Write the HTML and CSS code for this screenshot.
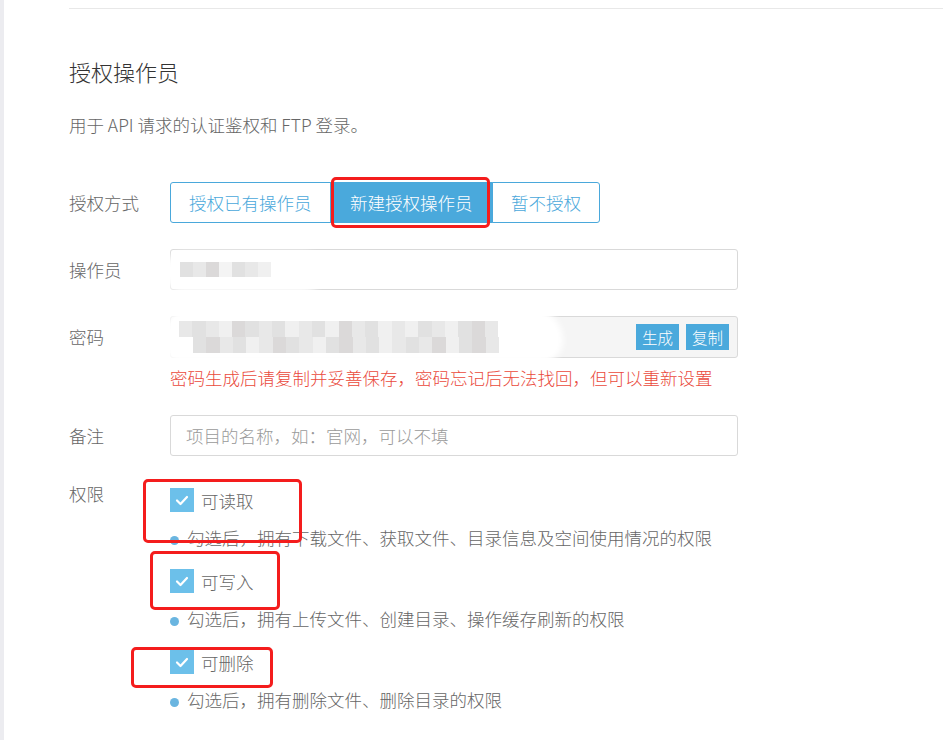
FILE: index.html
```html
<!DOCTYPE html>
<html lang="zh-CN">
<head>
<meta charset="utf-8">
<title>授权操作员</title>
<link rel="stylesheet" href="styles.css">
</head>
<body>
<div class="page">
  <div class="rail"></div>
  <main class="main">
    <div class="divider"></div>
    <h2 class="title">授权操作员</h2>
    <p class="desc">用于 API 请求的认证鉴权和 FTP 登录。</p>

    <form class="form">
      <div class="row">
        <span class="label">授权方式</span>
        <div class="seg">
          <button type="button" class="seg-btn">授权已有操作员</button>
          <button type="button" class="seg-btn active">新建授权操作员<span class="mark mark-a"></span></button>
          <button type="button" class="seg-btn">暂不授权</button>
        </div>
      </div>

      <div class="row row-gap">
        <span class="label">操作员</span>
        <div class="input input-op">
          <span class="blob blob-op"></span>
          <span class="pix pix-op">
            <i class="g2"></i><i class="g1"></i><i class="g3"></i><i class="g4"></i><i class="g2"></i><i class="g1"></i><i class="g0"></i>
          </span>
        </div>
      </div>

      <div class="row row-gap">
        <span class="label">密码</span>
        <div class="input input-pw">
          <span class="blob blob-pw"></span>
          <span class="pix pix-pw">
            <span class="pix-row">
              <i class="g1"></i><i class="g2"></i><i class="g1"></i><i class="g0"></i><i class="g3"></i><i class="g2"></i><i class="g1"></i><i class="g2"></i><i class="g0"></i><i class="g1"></i><i class="g2"></i><i class="g0"></i><i class="g3"></i><i class="g1"></i><i class="g2"></i><i class="g0"></i><i class="g1"></i><i class="g0"></i><i class="g2"></i><i class="g1"></i><i class="g0"></i><i class="g2"></i><i class="g3"></i><i class="g1"></i>
            </span>
            <span class="pix-row pix-row-2">
              <i class="g2"></i><i class="g3"></i><i class="g1"></i><i class="g2"></i><i class="g0"></i><i class="g1"></i><i class="g3"></i><i class="g2"></i><i class="g1"></i><i class="g0"></i><i class="g2"></i><i class="g3"></i><i class="g1"></i><i class="g2"></i><i class="g0"></i><i class="g1"></i><i class="g2"></i><i class="g1"></i><i class="g3"></i><i class="g0"></i><i class="g2"></i><i class="g3"></i><i class="g1"></i>
            </span>
          </span>
          <span class="mini-btns">
            <button type="button" class="mini-btn">生成</button>
            <button type="button" class="mini-btn">复制</button>
          </span>
        </div>
      </div>
      <p class="hint-error">密码生成后请复制并妥善保存，密码忘记后无法找回，但可以重新设置</p>

      <div class="row row-gap-2">
        <span class="label">备注</span>
        <input class="input input-text" type="text" placeholder="项目的名称，如：官网，可以不填">
      </div>

      <div class="row row-perms">
        <span class="label label-top">权限</span>
        <div class="perms">
          <div class="perm">
            <div class="perm-check">
              <span class="cb"><svg viewBox="0 0 24 24" width="24" height="24"><polyline points="7,12.5 10.5,16 17,9" fill="none" stroke="#fff" stroke-width="2.2" stroke-linecap="round" stroke-linejoin="round"/></svg></span>
              <span>可读取</span>
              <span class="mark mark-1"></span>
            </div>
            <div class="perm-desc"><span class="dot"></span>勾选后，拥有下载文件、获取文件、目录信息及空间使用情况的权限</div>
          </div>
          <div class="perm">
            <div class="perm-check">
              <span class="cb"><svg viewBox="0 0 24 24" width="24" height="24"><polyline points="7,12.5 10.5,16 17,9" fill="none" stroke="#fff" stroke-width="2.2" stroke-linecap="round" stroke-linejoin="round"/></svg></span>
              <span>可写入</span>
              <span class="mark mark-2"></span>
            </div>
            <div class="perm-desc"><span class="dot"></span>勾选后，拥有上传文件、创建目录、操作缓存刷新的权限</div>
          </div>
          <div class="perm">
            <div class="perm-check">
              <span class="cb"><svg viewBox="0 0 24 24" width="24" height="24"><polyline points="7,12.5 10.5,16 17,9" fill="none" stroke="#fff" stroke-width="2.2" stroke-linecap="round" stroke-linejoin="round"/></svg></span>
              <span>可删除</span>
              <span class="mark mark-3"></span>
            </div>
            <div class="perm-desc"><span class="dot"></span>勾选后，拥有删除文件、删除目录的权限</div>
          </div>
        </div>
      </div>
    </form>
  </main>
</div>
</body>
</html>
```

FILE: styles.css
```css
html, body {
  margin: 0;
  background: #fff;
}
body {
  font-family: "Noto Sans CJK SC", "Microsoft YaHei", sans-serif;
  color: #666;
  font-size: 17.5px;
  font-weight: 300;
}
.page {
  display: flex;
  min-height: 740px;
}
.rail {
  width: 4px;
  flex: none;
  background: #ececf0;
}
.main {
  flex: 1;
  padding-left: 65px;
}
.divider {
  margin-top: 8px;
  height: 1px;
  background: #e8e8e8;
}
.title {
  margin: 47px 0 0;
  font-size: 22px;
  line-height: 30px;
  font-weight: 300;
  color: #333;
}
.desc {
  margin: 26px 0 0;
  font-size: 17.5px;
  line-height: 26px;
  color: #666;
}
.form {
  margin-top: 44px;
}
.row {
  display: flex;
  align-items: center;
}
.row-gap {
  margin-top: 26px;
}
.row-gap-2 {
  margin-top: 25px;
}
.label {
  width: 101px;
  flex: none;
  color: #666;
  line-height: 26px;
}

/* segmented control */
.seg {
  display: flex;
}
.seg-btn {
  position: relative;
  height: 41px;
  padding: 0 18px;
  margin: 0;
  border: 1px solid #4aa8db;
  background: #fff;
  color: #4aa8db;
  font-family: inherit;
  font-weight: 300;
  font-size: 17.5px;
  cursor: pointer;
}
.seg-btn + .seg-btn {
  margin-left: -1px;
}
.seg-btn:first-child {
  border-radius: 3px 0 0 3px;
}
.seg-btn:last-child {
  border-radius: 0 3px 3px 0;
}
.seg-btn.active {
  padding: 0 19.5px;
  background: #4aa9dc;
  color: #fff;
}

/* inputs */
.input {
  position: relative;
  box-sizing: border-box;
  width: 568px;
  height: 41px;
  border: 1px solid #d9d9d9;
  border-radius: 3px;
  background: #fff;
}
.input-text {
  display: block;
  margin: 0;
  padding: 0 15px;
  font-family: inherit;
  font-weight: 300;
  font-size: 17.5px;
  color: #666;
  outline: none;
}
.input-text::placeholder {
  color: #9a9a9a;
}
.input-pw {
  height: 42px;
  background: #f5f5f5;
  display: flex;
  align-items: center;
  justify-content: flex-end;
  padding-right: 8px;
}
.mini-btns {
  display: flex;
  gap: 7px;
}
.mini-btn {
  width: 43px;
  height: 26px;
  padding: 0;
  border: 0;
  background: #4aa9dc;
  color: #fff;
  font-family: inherit;
  font-weight: 300;
  font-size: 15.5px;
  line-height: 26px;
}

/* blurred (redacted) values */
.blob {
  position: absolute;
  background: #fff;
  border-radius: 40px;
  filter: blur(3px);
}
.blob-op {
  left: -8px;
  top: 2px;
  width: 160px;
  height: 40px;
}
.blob-pw {
  left: -8px;
  top: -10px;
  width: 400px;
  height: 56px;
  border-radius: 50px 60px 40px 30px;
}
.pix {
  position: absolute;
  display: flex;
  flex-direction: column;
}
.pix i {
  display: block;
  flex: none;
}
.pix-op {
  left: 9px;
  top: 12px;
  flex-direction: row;
}
.pix-op i {
  width: 13px;
  height: 15px;
}
.pix-pw {
  left: 8px;
  top: 4px;
}
.pix-row {
  display: flex;
}
.pix-row i {
  width: 13.3px;
  height: 16px;
}
.pix-row-2 {
  padding-left: 14px;
}
.g0 { background: #f0f0f0; }
.g1 { background: #e8e8e8; }
.g2 { background: #e1e1e1; }
.g3 { background: #dbd9d9; }
.g4 { background: #f4f4f4; }

.hint-error {
  margin: 8px 0 0 101px;
  line-height: 24px;
  color: #ea4a3c;
}

/* permissions */
.row-perms {
  align-items: flex-start;
  margin-top: 25px;
}
.perms {
  padding-top: 7px;
}
.perm + .perm {
  margin-top: 19px;
}
.perm-check {
  position: relative;
  display: flex;
  align-items: center;
  gap: 7px;
  height: 24px;
  color: #666;
}
.cb {
  width: 24px;
  height: 24px;
  background: #6cc0ea;
  display: block;
}
.cb svg {
  display: block;
}
.perm-desc {
  display: flex;
  align-items: center;
  margin-top: 14px;
  line-height: 24px;
  color: #666;
}
.dot {
  width: 9px;
  height: 9px;
  margin: 4px 8px 0 0;
  border-radius: 50%;
  background: #6ab5e0;
}

/* red annotation frames */
.mark {
  position: absolute;
  box-sizing: border-box;
  border: 3px solid #f41d1d;
  border-radius: 5px;
  pointer-events: none;
}
.mark-a {
  left: 0;
  right: 2px;
  top: -6px;
  bottom: -6px;
}
.mark-1 {
  left: -27px;
  top: -9px;
  width: 159px;
  height: 64px;
}
.mark-2 {
  left: -20px;
  top: -18px;
  width: 130px;
  height: 59px;
}
.mark-3 {
  left: -39px;
  top: -3px;
  width: 142px;
  height: 41px;
}
```
